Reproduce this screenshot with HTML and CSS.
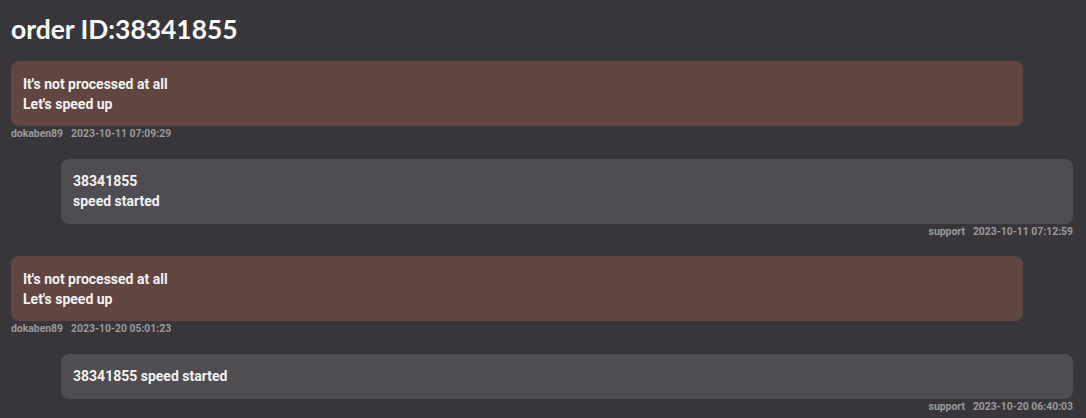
FILE: index.html
```html
<!DOCTYPE html>
<html>
<head>
<meta charset="utf-8">
<link rel="stylesheet" href="styles.css">
</head>
<body>
<div class="page">
  <h1 class="title">order ID:38341855</h1>
  <div class="thread">
    <div class="msg msg-user">
      <div class="bubble bubble-user">It's not processed at all<br>Let's speed up</div>
      <div class="meta"><span class="name">dokaben89</span><span class="time">2023-10-11 07:09:29</span></div>
    </div>
    <div class="msg msg-support">
      <div class="bubble bubble-support">38341855<br>speed started</div>
      <div class="meta"><span class="name">support</span><span class="time">2023-10-11 07:12:59</span></div>
    </div>
    <div class="msg msg-user">
      <div class="bubble bubble-user">It's not processed at all<br>Let's speed up</div>
      <div class="meta"><span class="name">dokaben89</span><span class="time">2023-10-20 05:01:23</span></div>
    </div>
    <div class="msg msg-support">
      <div class="bubble bubble-support">38341855 speed started</div>
      <div class="meta"><span class="name">support</span><span class="time">2023-10-20 06:40:03</span></div>
    </div>
  </div>
</div>
</body>
</html>
```
FILE: styles.css
```css
html, body {
  margin: 0;
  padding: 0;
  background: #38363b;
}
.page {
  padding: 12px 13px 0 11px;
  font-family: Roboto, "Liberation Sans", sans-serif;
  color: #f2f2f2;
}
.title {
  font-family: Lato, "Liberation Sans", sans-serif;
  font-weight: 700;
  font-size: 26.4px;
  line-height: 34px;
  margin: 0 0 15px 0;
  color: #ffffff;
}
.thread {
  display: flex;
  flex-direction: column;
  gap: 18.5px;
}
.msg {
  display: flex;
  flex-direction: column;
  width: calc(100% - 50px);
}
.msg-user { align-self: flex-start; }
.msg-support { align-self: flex-end; }
.bubble {
  border-radius: 8px;
  padding: 12.5px 12px;
  font-size: 14px;
  font-weight: 700;
  line-height: 20px;
}
.bubble-user { background: #614540; }
.bubble-support { background: #4f4d52; }
.meta {
  margin-top: 2px;
  font-size: 10.4px;
  font-weight: 700;
  line-height: 12px;
  color: #9b9a9d;
  display: flex;
  gap: 8px;
}
.msg-support .meta { justify-content: flex-end; }
```
